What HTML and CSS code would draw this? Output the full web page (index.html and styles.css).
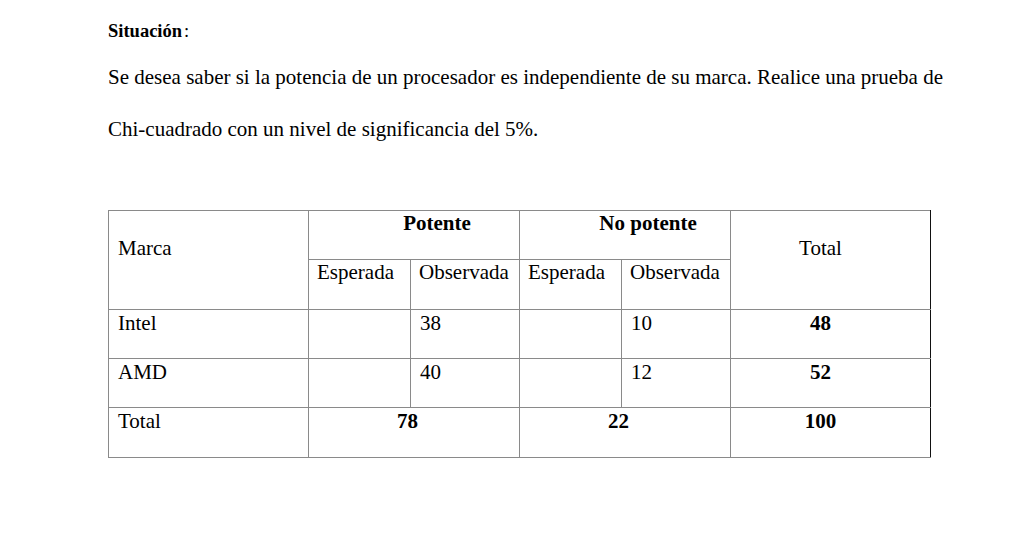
FILE: index.html
```html
<!DOCTYPE html>
<html lang="es">
<head>
<meta charset="utf-8">
<link rel="stylesheet" href="styles.css">
</head>
<body>
<div class="page">
  <p class="title"><b>Situación</b><span class="colon">:</span></p>
  <p class="text">Se desea saber si la potencia de un procesador es independiente de su marca. Realice una prueba de <span class="nowrap">Chi-cuadrado</span> con un nivel de significancia del 5%.</p>
  <table class="data">
    <colgroup>
      <col class="c-marca"><col class="c-sub"><col class="c-sub2"><col class="c-sub"><col class="c-sub2"><col class="c-total">
    </colgroup>
    <tr class="r1">
      <td rowspan="2" class="marca">Marca</td>
      <td colspan="2" class="center bold group">Potente</td>
      <td colspan="2" class="center bold group">No potente</td>
      <td rowspan="2" class="center totalh dark-r">Total</td>
    </tr>
    <tr class="r2">
      <td class="sub">Esperada</td>
      <td class="sub dark-l">Observada</td>
      <td class="sub">Esperada</td>
      <td class="sub dark-l">Observada</td>
    </tr>
    <tr class="r3">
      <td>Intel</td>
      <td></td>
      <td class="dark-l">38</td>
      <td></td>
      <td class="dark-l">10</td>
      <td class="center bold tot dark-r">48</td>
    </tr>
    <tr class="r3">
      <td>AMD</td>
      <td></td>
      <td class="dark-l">40</td>
      <td></td>
      <td class="dark-l">12</td>
      <td class="center bold tot dark-r">52</td>
    </tr>
    <tr class="r4">
      <td>Total</td>
      <td colspan="2" class="center bold sum">78</td>
      <td colspan="2" class="center bold sum">22</td>
      <td class="center bold tot dark-r">100</td>
    </tr>
  </table>
</div>
</body>
</html>
```
FILE: styles.css
```css
html, body {
  margin: 0;
  padding: 0;
  background: #fff;
}
.page {
  padding: 18px 0 0 108px;
  width: 840px;
  font-family: "Liberation Serif", "Times New Roman", serif;
  color: #000;
}
.title {
  margin: 0;
  font-size: 18.5px;
  line-height: 26px;
}
.colon {
  margin-left: 2px;
}
.text {
  margin: 7px 0 0 0;
  font-size: 21px;
  line-height: 52px;
  width: 840px;
}
.nowrap { white-space: nowrap; }
.data {
  margin-top: 55px;
  border-collapse: collapse;
  width: 822px;
  font-size: 21px;
  table-layout: fixed;
  border-top: 1px solid #555;
  border-left: 1px solid #777;
  border-bottom: 1px solid #777;
  border-right: 1px solid #111;
}
.c-marca { width: 200px; }
.c-sub { width: 102px; }
.c-sub2 { width: 109px; }
.c-total { width: 200px; }
.data td {
  border: 1px solid #8a8a8a;
  padding: 1px 6px 0 9px;
  vertical-align: top;
  line-height: 24px;
  box-sizing: border-box;
}
.r1 td { height: 49px; }
.r2 td { height: 50px; }
.r3 td { height: 49px; }
.r4 td { height: 50px; }
.data td.marca {
  padding-top: 25px;
}
.data td.totalh {
  padding-top: 25px;
  padding-right: 20px;
  padding-left: 0;
}
.data td.group {
  padding: 0 0 0 46px;
}
.data td.sub {
  padding: 0 6px 0 8px;
}
.data td.sum {
  padding-right: 13px;
  padding-left: 0;
}
.data td.tot {
  padding-right: 20px;
  padding-left: 0;
}
.data td.center { text-align: center; }
.data td.bold { font-weight: bold; }
.data td.dark-l { border-left-color: #000; }
.data td.dark-r { border-right-color: #111; }
```
